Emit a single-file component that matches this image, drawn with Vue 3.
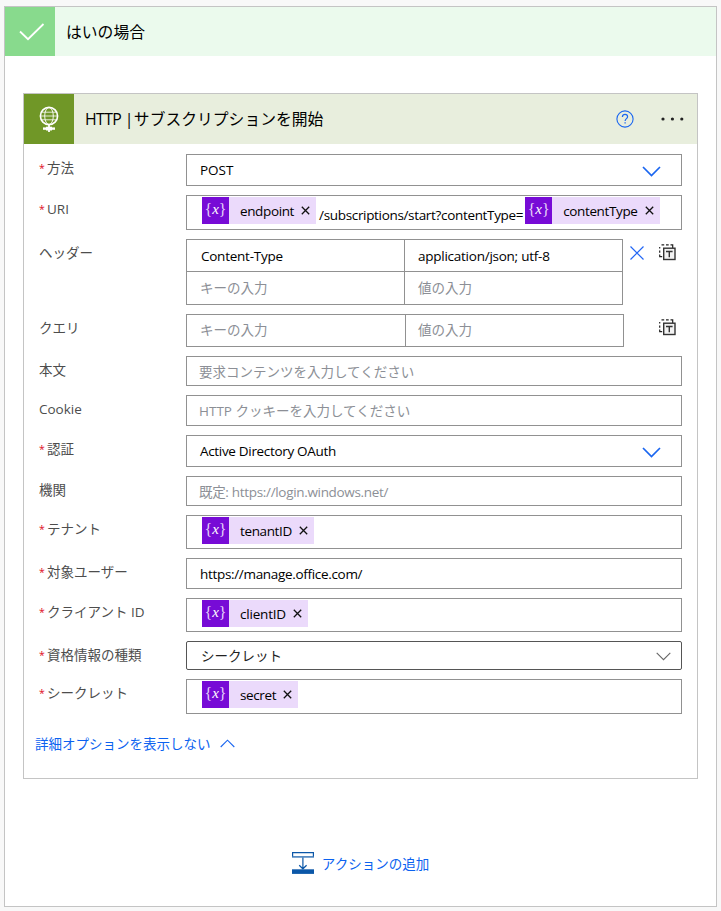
<script setup>
const fields = [
  { label: '方法', required: true, kind: 'select', value: 'POST', size: 'h32', text: 't-post' },
  {
    label: 'URI', required: true, kind: 'tokens', size: 'h35',
    parts: [
      { token: 'endpoint' },
      { plain: '/subscriptions/start?contentType=' },
      { token: 'contentType' },
    ],
  },
  {
    label: 'ヘッダー', kind: 'table', size: 'h66', removable: true,
    rows: [['Content-Type', 'application/json; utf-8'], null],
  },
  { label: 'クエリ', kind: 'table', size: 'h33', wide: true, rows: [null] },
  { label: '本文', kind: 'input', hint: '要求コンテンツを入力してください', size: 'h30' },
  { label: 'Cookie', kind: 'input', hint: 'HTTP クッキーを入力してください', size: 'h31' },
  { label: '認証', required: true, kind: 'select', value: 'Active Directory OAuth', size: 'h32', text: 'tight' },
  { label: '機関', kind: 'input', hint: '既定: https://login.windows.net/', size: 'h30', text: 'tight' },
  { label: 'テナント', required: true, kind: 'tokens', size: 'h34', parts: [{ token: 'tenantID' }] },
  { label: '対象ユーザー', required: true, kind: 'input', value: 'https://manage.office.com/', size: 'h31', text: 'tight filled' },
  { label: 'クライアント ID', required: true, kind: 'tokens', size: 'h34', parts: [{ token: 'clientID' }] },
  { label: '資格情報の種類', required: true, kind: 'combo', value: 'シークレット', size: 'h29' },
  { label: 'シークレット', required: true, kind: 'tokens', size: 'h35', parts: [{ token: 'secret' }] },
]
</script>

<template>
  <div class="page">
    <section class="branch">
      <header class="branch-head">
        <span class="branch-tile">
          <svg width="26" height="18" viewBox="0 0 26 18" fill="none" stroke="#fff" stroke-width="1.8">
            <path d="M1 8.5 9 16.2 24.5 1" />
          </svg>
        </span>
        <span class="branch-title">はいの場合</span>
      </header>

      <article class="card">
        <header class="card-head">
          <span class="card-tile">
            <svg width="20" height="27" viewBox="0 0 20 27" fill="none" stroke="#fff">
              <circle cx="10" cy="10" r="8.6" stroke-width="1.6" />
              <ellipse cx="10" cy="10" rx="4.3" ry="8.5" stroke-width="0.9" />
              <path d="M3 6.2h14M1.5 10h17M3 13.8h14" stroke-width="0.8" />
              <path d="M10 18.5v7.5" stroke-width="1.8" />
              <path d="M4 22.6h12" stroke-width="2.4" />
              <path d="M7 22.6h6" stroke-width="3.8" />
            </svg>
          </span>
          <span class="card-title"><span class="latin">HTTP |</span> サブスクリプションを開始</span>
          <svg class="help" width="18" height="18" viewBox="0 0 18 18" fill="none" stroke="#1a66f0">
            <circle cx="9" cy="9" r="8.1" stroke-width="1.1" />
            <path d="M6.4 6.9C6.4 5.2 7.5 4.3 9 4.3s2.6.9 2.6 2.4C11.6 8.6 9.1 8.7 9.1 11" stroke-width="1.2" />
            <path d="M9.1 12.2v1.4" stroke-width="1.3" />
          </svg>
          <svg class="more" width="23" height="4" viewBox="0 0 23 4" fill="#222">
            <circle cx="2" cy="2" r="1.6" /><circle cx="11.4" cy="2" r="1.6" /><circle cx="20.8" cy="2" r="1.6" />
          </svg>
        </header>

        <div class="form">
          <div v-for="f in fields" :key="f.label" class="row" :class="f.size">
            <div class="label"><span v-if="f.required" class="star">*</span>{{ f.label }}</div>

            <div v-if="f.kind === 'table'" class="table-wrap">
              <div class="table" :class="{ wide: f.wide }">
                <div v-for="(r, i) in f.rows" :key="i" class="pair" :class="{ first: f.rows.length > 1 && i === 0 }">
                  <template v-if="r">
                    <div class="cell key filled">{{ r[0] }}</div>
                    <div class="cell filled">{{ r[1] }}</div>
                  </template>
                  <template v-else>
                    <div class="cell key hint">キーの入力</div>
                    <div class="cell hint">値の入力</div>
                  </template>
                </div>
              </div>
              <svg v-if="f.removable" class="remove" width="14" height="14" viewBox="0 0 14 14" fill="none" stroke="#2266f5" stroke-width="1.2">
                <path d="M.5.5l13 13M13.500.5l-13 13" />
              </svg>
              <svg class="template" width="17" height="17" viewBox="0 0 17 17" fill="none">
                <path d="M.7 4.500V3M2.500.8h2.700M7 .8h2.700M11.500.8h2.200V4M.7 6.500v2.200M.7 10.500v2.200h2.500" stroke="#222" stroke-width="1.2" />
                <rect x="4.700" y="4.200" width="11.300" height="11.300" fill="#f2f2f2" stroke="#333" stroke-width="1.4" />
                <path d="M7 7.500h6.600M10.300 7.500v5.800" stroke="#333" stroke-width="1.4" />
              </svg>
            </div>

            <div v-else class="box" :class="[f.kind, f.text]">
              <template v-if="f.kind === 'tokens'">
                <template v-for="(p, i) in f.parts" :key="i">
                  <span v-if="p.token" class="token">
                    <span class="fx"><b>{</b><i>x</i><b>}</b></span>
                    <span class="name" :class="'n-' + p.token">{{ p.token }}</span>
                    <svg width="9" height="9" viewBox="0 0 9 9" fill="none" stroke="#111" stroke-width="1.3">
                      <path d="M.8.8l7.400 7.400M8.200.8l-7.400 7.400" />
                    </svg>
                  </span>
                  <span v-else class="plain">{{ p.plain }}</span>
                </template>
              </template>
              <template v-else>
                <span v-if="f.value" class="value">{{ f.value }}</span>
                <span v-else class="value hint">{{ f.hint }}</span>
                <svg v-if="f.kind === 'select'" class="chev" width="19" height="11" viewBox="0 0 19 11" fill="none" stroke="#1a66f0" stroke-width="1.7">
                  <path d="M1 1l8.500 8.500L18 1" />
                </svg>
                <svg v-if="f.kind === 'combo'" class="chev-thin" width="15" height="9" viewBox="0 0 15 9" fill="none" stroke="#666" stroke-width="1.1">
                  <path d="M.7.8l6.800 6.800L14.300.8" />
                </svg>
              </template>
            </div>
          </div>
        </div>

        <div class="toggle">
          <span>詳細オプションを表示しない</span>
          <svg width="15" height="9" viewBox="0 0 15 9" fill="none" stroke="#1a66f0" stroke-width="1.1">
            <path d="M.7 8l6.800-6.800L14.300 8" />
          </svg>
        </div>
      </article>

      <div class="add">
        <svg width="22" height="22" viewBox="0 0 22 22" fill="none" stroke="#0b57a8">
          <path d="M.6 5V.6h20.800V5" stroke-width="1.200" />
          <path d="M0 4.900h22" stroke-width="1.500" stroke="#3a78b8" />
          <path d="M10.900 5.500v11M7.200 13.200l3.700 3.600 3.700-3.600" stroke-width="1.200" />
          <path d="M0 19.600h22" stroke-width="4.600" />
        </svg>
        <span>アクションの追加</span>
      </div>
    </section>
  </div>
</template>

<style>
body {
  background: #f8f8f8;
}
</style>

<style scoped>
.page {
  box-sizing: border-box;
  height: 911px;
  padding: 6px 4px 4px;
  background: #f8f8f8;
  font-family: "Open Sans", "Noto Sans CJK JP", sans-serif;
  font-size: 13.5px;
  color: #000;
  white-space: nowrap;
}
.page *,
.page *::before {
  box-sizing: border-box;
}
svg {
  display: block;
  flex: none;
}
.branch {
  width: 713px;
  height: 901px;
  border: 1px solid #c4c4c4;
  background: #fff;
}
.branch-head {
  display: flex;
  align-items: center;
  height: 49px;
  background: #ebfaed;
}
.branch-tile {
  display: flex;
  align-items: center;
  justify-content: center;
  width: 50px;
  height: 49px;
  padding-left: 3px;
  background: #88da8d;
}
.branch-title {
  margin-left: 11px;
  font-size: 15.8px;
}
.card {
  width: 675px;
  height: 686px;
  margin: 37px 0 0 18px;
  border: 1px solid #c4c4c4;
  background: #fff;
}
.card-head {
  display: flex;
  align-items: center;
  height: 50px;
  background: #e8eedd;
}
.card-tile {
  display: flex;
  align-items: center;
  justify-content: center;
  width: 50px;
  height: 50px;
  background: #709727;
}
.card-title {
  width: 531px;
  margin-left: 11px;
  padding-bottom: 2px;
  font-size: 15.8px;
}
.card-title .latin {
  margin-right: -3px;
  letter-spacing: -0.6px;
}
.help {
  margin-bottom: 1px;
}
.more {
  margin-left: 27px;
  margin-bottom: 1px;
}
.form {
  display: flex;
  flex-direction: column;
  gap: 9px;
  padding: 10px 15px 0;
}
.row {
  display: flex;
}
.h29 { height: 29px; }
.h30 { height: 30px; }
.h31 { height: 31px; }
.h32 { height: 32px; }
.h33 { height: 33px; }
.h34 { height: 34px; }
.h35 { height: 35px; }
.h66 { height: 66px; }
.label {
  display: flex;
  width: 147px;
  height: 28px;
  line-height: 28px;
  color: #4d4d4d;
}
.star {
  width: 8px;
  color: #e00b1c;
  font-size: 10.5px;
}
.box {
  display: flex;
  align-items: center;
  width: 496px;
  height: 100%;
  border: 1px solid #919191;
  background: #fff;
  line-height: 20px;
}
.input {
  padding: 1px 0 0 12px;
}
.select,
.input.filled {
  padding-left: 13px;
}
.tight {
  letter-spacing: -0.32px;
}
.select .value,
.combo .value {
  flex: 1;
}
.chev {
  margin: 2px 20px 0 0;
}
.combo {
  padding-left: 14px;
  border-color: #555;
  border-radius: 2px;
  color: #222;
}
.chev-thin {
  margin: 2px 10px 0 0;
}
.hint {
  color: #8c8f96;
}
.tokens {
  align-items: flex-start;
  padding: 1px 0 0 15px;
}
.token {
  display: flex;
  align-items: center;
  height: 27px;
  padding-right: 6px;
  background: #ebdafb;
}
.fx {
  display: flex;
  align-items: center;
  justify-content: center;
  width: 27px;
  height: 27px;
  padding-bottom: 3px;
  background: #770bd6;
  color: #fff;
  font-family: "Liberation Serif", serif;
  font-size: 16px;
  line-height: 25px;
}
.fx b {
  font-weight: 400;
  color: #e6d2f8;
}
.fx i {
  font-size: 15px;
}
.name {
  margin: 1px 7px 0 11px;
  letter-spacing: -0.37px;
}
.n-clientID {
  letter-spacing: -0.2px;
}
.plain {
  margin: 8px 2px 0 3px;
  letter-spacing: -0.33px;
}
.table-wrap {
  display: flex;
  width: 496px;
  align-items: flex-start;
}
.table {
  display: flex;
  flex-direction: column;
  width: 437px;
  height: 100%;
  border: 1px solid #919191;
}
.table.wide {
  width: 438px;
}
.pair {
  display: flex;
  flex: 1;
}
.pair.first {
  flex: none;
  height: 31px;
}
.pair + .pair {
  border-top: 1px solid #919191;
}
.cell {
  display: flex;
  align-items: center;
  flex: 1;
  padding: 0 0 3px 13px;
}
.cell.key {
  flex: none;
  width: 218px;
  border-right: 1px solid #919191;
}
.cell.filled {
  padding-bottom: 0;
  letter-spacing: -0.25px;
}
.cell.key.filled {
  padding-left: 14px;
}
.wide .cell.key {
  width: 219px;
}
.wide .cell {
  padding-left: 12px;
}
.wide .cell.key {
  padding-left: 13px;
}
.remove {
  margin: 7px 0 0 7px;
}
.template {
  margin: 5px 6px 0 auto;
}
.toggle {
  display: flex;
  align-items: center;
  gap: 9px;
  height: 20px;
  margin: 19px 0 0 11px;
  color: #0b62f0;
}
.add {
  display: flex;
  align-items: center;
  justify-content: center;
  gap: 8px;
  height: 22px;
  margin-top: 73px;
  color: #0b62f0;
}
</style>
